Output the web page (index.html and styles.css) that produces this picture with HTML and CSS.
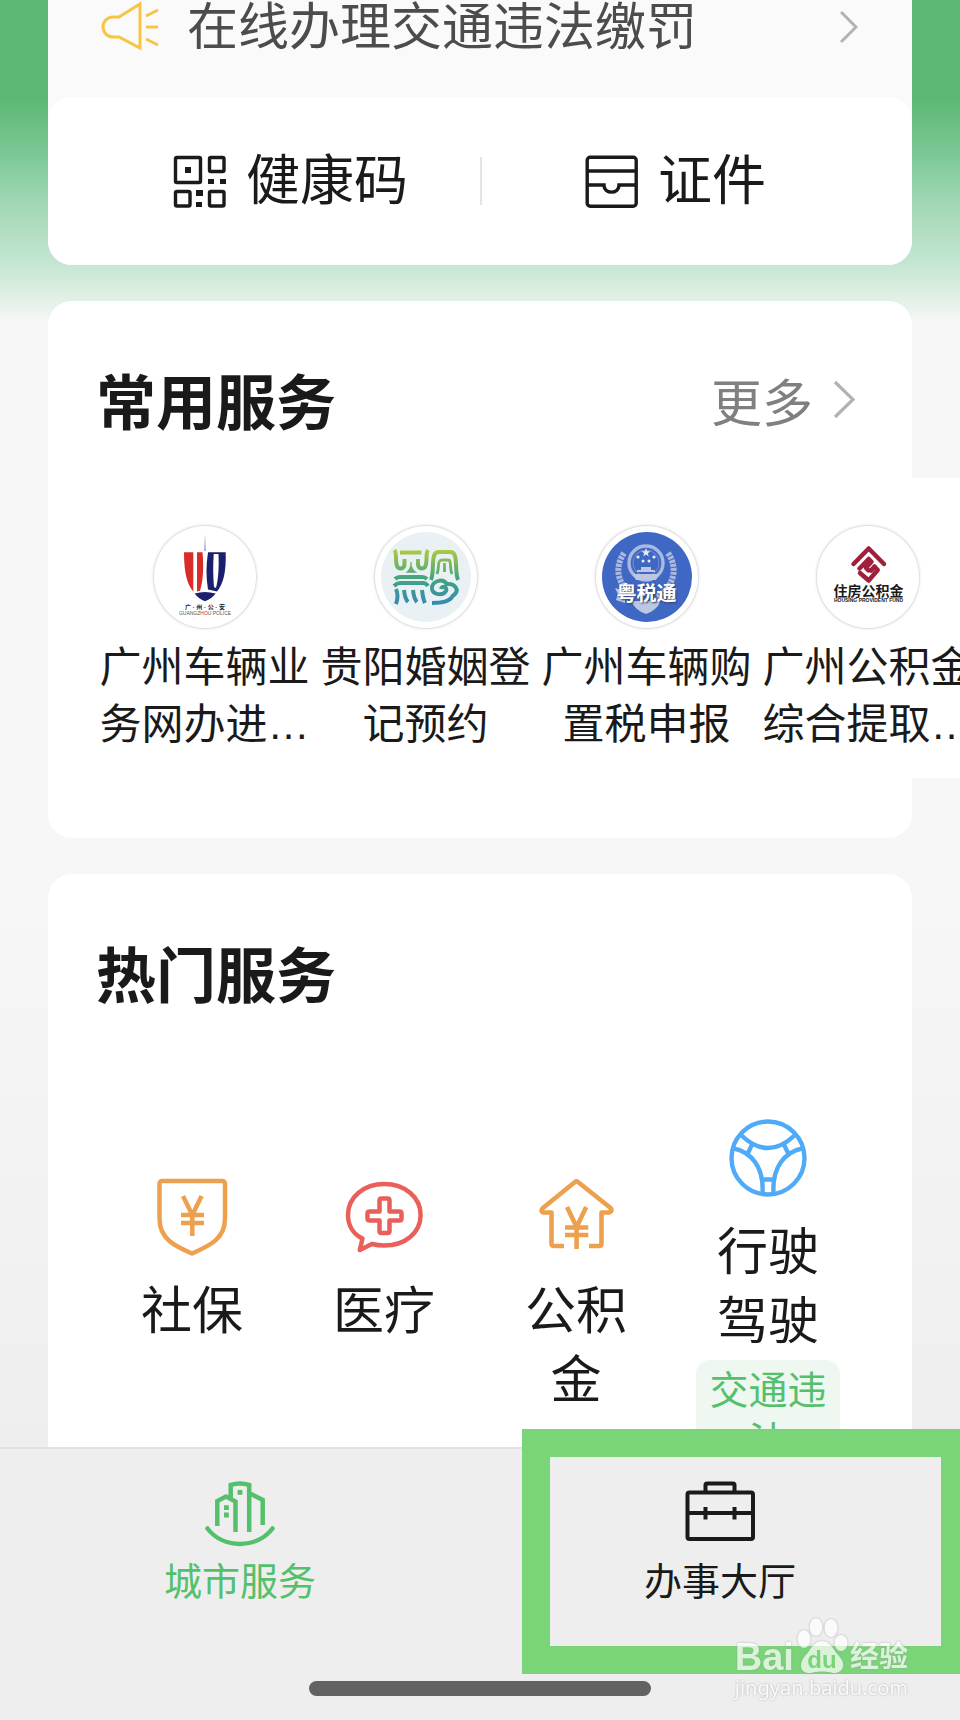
FILE: index.html
```html
<!DOCTYPE html>
<html lang="zh-CN">
<head>
  <meta charset="UTF-8" />
  <meta name="viewport" content="width=device-width, initial-scale=1.0" />
  <title>城市服务</title>
  <link rel="stylesheet" href="styles.css">
</head>
<body>
  <div class="app">
    <main class="content">
      <section class="card top-card">
        <a class="notice" href="#">
          <svg width="58" height="54" viewBox="0 0 58 54" fill="none" stroke="#f6c544" stroke-width="3">
            <path d="M18 16H12a10 10 0 0 0 0 20h6L39 47V3Z" />
            <path d="M45 15l12-6M45 26h12M45 38l12 6" />
          </svg>
          <span class="notice-text">在线办理交通违法缴罚</span>
          <svg width="18" height="34" viewBox="0 0 18 34" fill="none" stroke="#b2b2b2" stroke-width="3"><path d="M1 1l15 15L1 31" /></svg>
        </a>
        <div class="quick">
          <a class="quick-item" href="#">
            <svg width="53" height="53" viewBox="0 0 53 53" fill="none" stroke="#1a1a1a" stroke-width="3.4">
              <rect x="2.5" y="2.5" width="25" height="25" rx="1.5" />
              <rect x="36.5" y="2.5" width="14.5" height="14" rx="1.5" />
              <rect x="2.5" y="36.5" width="14.5" height="14.5" rx="1.5" />
              <rect x="36.5" y="36.5" width="14.5" height="14.5" rx="1.5" />
              <path fill="#1a1a1a" stroke="none" d="M12 12h6v6h-6zM35 24h6v5h-6zM47 24h6v5h-6zM23 35h7v6h-7zM23 47h6v5h-6z" />
            </svg>
            <span>健康码</span>
          </a>
          <a class="quick-item" href="#">
            <svg width="53" height="53" viewBox="0 0 53 53" fill="none" stroke="#1a1a1a" stroke-width="3.4">
              <rect x="2.2" y="2.2" width="49" height="49" rx="3" />
              <path d="M2 16h49M2 30h17c0 9.500 15 9.500 15 0h17" />
            </svg>
            <span>证件</span>
          </a>
        </div>
      </section>

      <section class="card common-card">
        <header class="card-header">
          <h2>常用服务</h2>
          <a class="more" href="#">
            更多
            <svg width="23" height="50" viewBox="0 0 23 50" fill="none" stroke="#b2b2b2" stroke-width="3.2"><path d="M2 2l18 17.500L2 37" /></svg>
          </a>
        </header>
        <div class="service-list">
          <a class="service" href="#">
            <svg class="logo" viewBox="0 0 104 104">
              <path fill="#a9acd4" d="M52 9l1 17h-2z" />
              <path fill="#d92b27" d="M31 27.300H40.300V66.700C34 59 31 48 31 27.300zM44 27.300h5.500c1.200 13 1 28-2.500 38.500L44 66.500z" />
              <path fill="#1c1f6e" d="M55 27.300H72.700c.5 19-2 31-8.700 39.200l-9-2c-2-12-2-24 0-37.200z" />
              <path fill="#fff" d="M60.700 29h4.800c.5 13 0 24-2.500 34l-2-1c-1-10-1-22-.3-33z" />
              <path fill="#1c1f6e" d="M41.700 68.500q10-3 21 0Q59 73.500 52 76.200 45 73.500 41.700 68.500z" />
              <g text-anchor="middle">
                <text x="52" y="84" font-size="6" font-weight="700" fill="#222">广 · 州 · 公 · 安</text>
                <text x="52" y="90" font-size="5" fill="#555">GUANGZ<tspan fill="#d92b27">HO</tspan>U POLICE</text>
              </g>
            </svg>
            <span class="service-name">广州车辆业务网办进…</span>
          </a>
          <a class="service" href="#">
            <svg class="logo" viewBox="0 0 104 104">
              <defs>
                <linearGradient id="gy" gradientUnits="userSpaceOnUse" x1="0" y1="24" x2="0" y2="80">
                  <stop offset="0" stop-color="#b2cc3c" />
                  <stop offset=".5" stop-color="#46a67c" />
                  <stop offset="1" stop-color="#3688b4" />
                </linearGradient>
              </defs>
              <circle cx="52" cy="52" r="45" fill="#e9f1f5" />
              <g fill="none" stroke="url(#gy)" stroke-width="4">
                <path d="M20.500 25c3 4 0 12 3 17 3 3 7 1 7-3v-5M54 25c-3 4 0 12-3 17-3 3-7 1-7-3v-5M26 27.500h21.500" />
                <path d="M37 37v4q-1 4-3.500 6h7.500q-3-2-4-6z" stroke-width="1.500" fill="url(#gy)" />
                <path d="M21 54q2-2 5-2h22q3 0 5 2M20 61q3-3 6-3h23q3 0 5 3" />
                <path d="M22 64q3 7 0 15M30 65q1 9 4 12M39 65q1 9 4 12M48 65q1 9 3 13" />
                <path d="M57 55c3-8 1-18 3-24q1-4 5-4h11q4 0 5 4c2 7 0 16 3 24" />
                <path d="M63 49c2-5 1-8 2-12q1-2 3-2h6q2 0 2 2c1 4 0 8 2 12M70.500 38v9" stroke-width="2.800" />
                <path d="M67 64c1-4 7-2 5 2-3 5-13 4-14-2-1-7 10-12 15-5 8-1 12 6 8 10-2 2-2 1-3 3-3 5-11 6-20 6" />
              </g>
            </svg>
            <span class="service-name">贵阳婚姻登记预约</span>
          </a>
          <a class="service" href="#">
            <svg class="logo" viewBox="0 0 104 104">
              <circle cx="52" cy="52" r="45" fill="#3f67c4" />
              <g fill="none" stroke="#a9b9df">
                <path d="M29 28c-10 15-7 32 11 44M73 28c10 15 7 32-11 44" stroke-width="6" stroke-dasharray="3 1" />
                <circle cx="51" cy="38" r="17" stroke-width="3.400" />
                <circle cx="51" cy="38" r="13" stroke-width=".5" />
              </g>
              <path fill="#bcc8e2" d="M46 42h10v3h4v2H42v-2h4zM38 49h26l-3 6H41zM20 63l10 3v12l-9-3 2-6zM82 63l-10 3v12l9-3-2-6zM36 76h30q-5 10-15 13-10-3-15-13z" />
              <path fill="#e8edf8" d="M51 23l1.100 3.200h3.400l-2.700 2 1 3.300-2.800-2-2.800 2 1-3.300-2.700-2h3.400z" />
              <g fill="#e8edf8"><circle cx="43" cy="32" r="1.600" /><circle cx="59" cy="32" r="1.600" /><circle cx="48" cy="36" r="1.500" /><circle cx="54" cy="36" r="1.500" /></g>
              <text class="tax-text" x="51.500" y="76" font-size="20" font-weight="700" fill="#fff" text-anchor="middle">粤税通</text>
            </svg>
            <span class="service-name">广州车辆购置税申报</span>
          </a>
          <a class="service" href="#">
            <svg class="logo" viewBox="0 0 104 104">
              <g fill="none" stroke="#a01f3c" stroke-width="4.500" stroke-linecap="round" stroke-linejoin="round">
                <path d="M37.500 39L52.700 23.500 68 39" />
                <path d="M43.500 43.500l9.200-9.500 2.800 2.800-5.500 6 2.500 2.500" />
                <path d="M44 48l8.700 7.500 9-10.500-3.200-3.500-3.500 4" />
              </g>
              <g text-anchor="middle" font-weight="700" fill="#1a1a1a">
                <text x="52.500" y="70.500" font-size="14">住房公积金</text>
                <text x="52.500" y="77" font-size="5">HOUSING PROVIDENT FUND</text>
              </g>
            </svg>
            <span class="service-name">广州公积金综合提取…</span>
          </a>
        </div>
      </section>

      <section class="card">
        <header class="card-header">
          <h2>热门服务</h2>
        </header>
        <div class="hot-list">
          <a class="hot" href="#">
            <svg width="78" height="78" viewBox="0 0 78 78" fill="none" stroke="#eda14f" stroke-width="4.500" stroke-linejoin="round">
              <path d="M9 3H69.500a2.500 2.500 0 0 1 2.500 2.500V41C72 61 56 68 39 75.500 22 68 6.500 61 6.500 41V5.500A2.500 2.500 0 0 1 9 3Z" />
              <path d="M30 18l9.300 19L48.600 18M39.300 36v22M28 37h23M28 45h23" />
            </svg>
            <span>社保</span>
          </a>
          <a class="hot" href="#">
            <svg width="78" height="78" viewBox="0 0 78 78" fill="none" stroke="#e9605b" stroke-width="4.500" stroke-linejoin="round">
              <path d="M17.500 60.500C8 56 3 47 3 37 3 19 19 6 39.300 6S75.600 19 75.600 37 60 67.500 39.300 67.500Q33 67.500 27 66L14.800 72Z" />
              <path d="M36.500 20.500h6q2 0 2 2v11h10q2 0 2 2v5q0 2-2 2h-10v10.500q0 2-2 2h-6q-2 0-2-2V42.500h-10q-2 0-2-2v-5q0-2 2-2h10v-11q0-2 2-2Z" />
            </svg>
            <span>医疗</span>
          </a>
          <a class="hot" href="#">
            <svg width="78" height="78" viewBox="0 0 78 78" fill="none" stroke="#eda14f" stroke-width="4.600" stroke-linejoin="round">
              <path d="M27 68H17q-2.500 0-2.500-2.500V34.500H6.500q-4-1.500 0-5L38 4q1.500-1.300 3 0L73 29.500q3.500 3.500-1 5H64.500V65.500q0 2.500-2.500 2.500H52" />
              <path d="M30 29l9.600 20L49.200 29M39.600 48v23M28 49.500h23.300M28 57h23.300" />
            </svg>
            <span>公积金</span>
          </a>
          <a class="hot tagged" href="#">
            <svg width="78" height="78" viewBox="0 0 78 78" fill="none" stroke="#4faaf8" stroke-width="4.400">
              <circle cx="39" cy="39" r="36.500" />
              <path d="M12 16Q39 42 66 16M5 29.500C22 33 35 48 33.500 74M73 29.500C56 33 43 48 44.500 74M23 25.500l-4 8.500M55 25.500l4 8.500M34 60.500h10" />
            </svg>
            <span>行驶驾驶</span>
            <em>交通违法</em>
          </a>
        </div>
      </section>
    </main>

    <nav class="tabbar">
      <a class="tab active" href="#">
        <svg width="70" height="68" viewBox="0 0 70 68" fill="none" stroke="currentColor" stroke-width="4.500">
          <path d="M2.500 47.500C18 68 52 68 67.500 47.500" stroke-linecap="round" />
          <path d="M12.300 45V20L21 15.500 30.500 20.500V51M25.700 18V4q9.300-3 18.500 0V51M44 12l13.700 7v25" />
          <path fill="currentColor" stroke="none" d="M32.600 9h4.800v4.800h-4.800zM19 24.300h4.800v4.800H19zM19 31.600h4.800v4.800H19z" />
        </svg>
        <span>城市服务</span>
      </a>
      <a class="tab" href="#">
        <svg width="70" height="68" viewBox="0 0 70 68" fill="none" stroke="currentColor" stroke-width="4">
          <rect x="2.500" y="11.500" width="65.500" height="46.500" rx="2" />
          <path d="M20.500 11V4q0-1.500 1.500-1.500h26q1.500 0 1.500 1.500V11M2 32h66M20.500 26v12.500M49.500 26v12.500" />
        </svg>
        <span>办事大厅</span>
      </a>
      <div class="highlight"></div>
      <div class="home-indicator"></div>
      <div class="watermark">
        <div class="brand">
          <span class="brand-latin">Bai</span>
          <svg width="52" height="56" viewBox="0 0 52 56">
            <g fill="#fff">
              <ellipse cx="8" cy="22" rx="6.500" ry="9" /><ellipse cx="20" cy="10" rx="6.500" ry="9" />
              <ellipse cx="35" cy="11" rx="6.500" ry="9" /><ellipse cx="45" cy="26" rx="6.500" ry="8" />
              <path d="M26 24c9 0 11 9 17 15 9 10 2 18-6 17-7-2-15-2-22 0-9 1-14-7-6-17 6-6 8-15 17-15z" />
            </g>
            <text x="26" y="51" font-size="24" font-weight="700" fill="#79d577" text-anchor="middle">du</text>
          </svg>
          <span class="brand-cn">经验</span>
        </div>
        <div class="site">jingyan.baidu.com</div>
      </div>
    </nav>
  </div>
</body>
</html>
```
FILE: styles.css
```css
* {
  box-sizing: border-box;
}
body {
  margin: 0;
  font-family: "Liberation Sans", "Noto Sans CJK SC", sans-serif;
  color: #1a1a1a;
}
a {
  color: inherit;
  text-decoration: none;
}
svg {
  display: block;
  flex-shrink: 0;
}
.app {
  display: flex;
  flex-direction: column;
  height: 100vh;
  overflow: hidden;
  background:
    linear-gradient(#5db875 0, #5db875 100px, #80ca99 160px, #a2d8b5 205px, #c4e5d1 262px, #e3f0e7 300px, #f7f7f7 322px, transparent 322px) no-repeat,
    linear-gradient(#f7f7f7 50%, #eeeeee 85%);
}
.content {
  flex: 1;
  min-height: 0;
  overflow: hidden;
  padding: 0 48px;
}
.card {
  background: #fff;
  border-radius: 24px;
  margin-bottom: 36px;
}
.top-card {
  background: #fafafa;
  border-radius: 0 0 24px 24px;
}
.notice {
  display: flex;
  align-items: center;
  padding: 0 54px 41px 53px;
  color: #4c4c4c;
  font-size: 51px;
  line-height: 56px;
}
.notice-text {
  flex: 1;
  margin-left: 28px;
}
.quick {
  display: grid;
  grid-template-columns: 1fr 1fr;
  padding: 60px 48px;
  background: #fff;
  border-radius: 24px;
}
.quick-item {
  display: flex;
  align-items: center;
  justify-content: center;
  gap: 20px;
  height: 48px;
  padding-left: 5px;
  font-size: 54px;
  line-height: 48px;
}
.quick-item + .quick-item {
  border-left: 2px solid #e5e5e5;
}
.card-header {
  display: flex;
  align-items: center;
  justify-content: space-between;
  padding: 64px 56px 33px 48px;
  line-height: 80px;
}
h2 {
  margin: 0;
  font-size: 60px;
  font-weight: 700;
}
.more {
  display: flex;
  align-items: center;
  gap: 20px;
  color: #808080;
  font-size: 51px;
}

.common-card {
  padding-bottom: 60px;
}
.service-list {
  display: flex;
  margin: 0 -48px 0 46px;
  padding: 47px 0 25px;
  overflow: hidden;
  background: #fff;
}
.service {
  display: flex;
  flex-direction: column;
  align-items: center;
  flex: 0 0 221px;
  gap: 10px;
}
.logo {
  width: 104px;
  height: 104px;
  border-radius: 50%;
  box-shadow: inset 0 0 0 1px #e0e0e0, 0 0 3px #e4e4e4;
}
.tax-text {
  text-shadow: 1px 1px 2px #33415f;
}
.service-name {
  width: 210px;
  font-size: 42px;
  line-height: 57px;
  text-align: center;
}

.hot-list {
  display: grid;
  grid-template-columns: repeat(4, 1fr);
  padding: 68px 48px;
}
.hot {
  display: flex;
  flex-direction: column;
  align-items: center;
  gap: 21px;
  padding: 59px 24px 0;
  font-size: 51px;
  line-height: 69px;
  text-align: center;
}
.tagged {
  padding-top: 0;
}
.hot em {
  width: 100%;
  margin-top: -17px;
  padding: 5px 12px;
  border-radius: 14px;
  background: #eef8f1;
  color: #55c06c;
  font-size: 39px;
  font-style: normal;
  line-height: 51px;
}

.tabbar {
  position: relative;
  display: flex;
  height: 273px;
  border-top: 2px solid #e2e2e2;
  background: #eeeeee;
}
.tab {
  display: flex;
  flex: 1;
  flex-direction: column;
  align-items: center;
  gap: 8px;
  padding-top: 32px;
  font-size: 38px;
  line-height: 50px;
}
.active {
  color: #55c06c;
}
.highlight {
  position: absolute;
  top: -20px;
  left: calc(50% + 42px);
  right: -9px;
  height: 245px;
  border: 28px solid #79d577;
}
.home-indicator {
  position: absolute;
  bottom: 24px;
  left: 50%;
  width: 342px;
  height: 15px;
  margin-left: -171px;
  border-radius: 8px;
  background: #626262;
}
.watermark {
  position: absolute;
  right: 52px;
  bottom: 17px;
  color: #fff;
  opacity: .72;
  filter: drop-shadow(0 0 1px #999);
}
.brand {
  display: flex;
  align-items: flex-end;
  justify-content: space-between;
  font-weight: 700;
  line-height: 32px;
}
.brand-latin {
  font-size: 38px;
}
.brand-cn {
  font-size: 29px;
}
.site {
  font-family: "Noto Sans", sans-serif;
  font-size: 20px;
  line-height: 30px;
}
```
